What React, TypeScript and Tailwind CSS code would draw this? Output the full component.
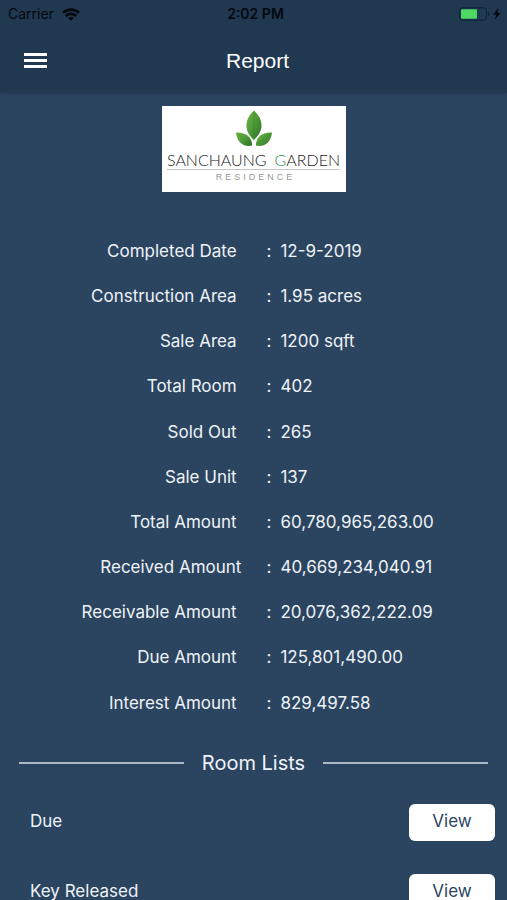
const details = [
  { label: "Completed Date ", value: "12-9-2019" },
  { label: "Construction Area ", value: "1.95 acres" },
  { label: "Sale Area ", value: "1200 sqft" },
  { label: "Total Room ", value: "402" },
  { label: "Sold Out ", value: "265" },
  { label: "Sale Unit ", value: "137" },
  { label: "Total Amount ", value: "60,780,965,263.00" },
  { label: "Received Amount", value: "40,669,234,040.91" },
  { label: "Receivable Amount ", value: "20,076,362,222.09" },
  { label: "Due Amount ", value: "125,801,490.00" },
  { label: "Interest Amount ", value: "829,497.58" },
];

const rooms = ["Due", "Key Released"];

function WifiIcon() {
  return (
    <svg width="18" height="13" viewBox="0 0 18 13" fill="none" stroke="currentColor" strokeWidth="2.6" aria-hidden="true">
      <path d="M1 4.800C5.500 0.500 12.500 0.500 17 4.800" />
      <path d="M3.900 8C6.800 5.200 11.200 5.200 14.100 8" />
      <path d="M9 12.800L6.200 10.200C7.800 8.700 10.200 8.700 11.800 10.200Z" fill="currentColor" stroke="none" />
    </svg>
  );
}

function BatteryIcon() {
  return (
    <svg width="44" height="14" viewBox="0 0 44 14" aria-hidden="true">
      <rect x="0.500" y="0.800" width="27" height="12.400" rx="3" fill="none" stroke="#0d2238" strokeWidth="1" />
      <rect x="2" y="2.300" width="16" height="9.400" rx="1" fill="#4cd964" />
      <path d="M29 5v4c1.600-0.600 1.600-3.400 0-4z" fill="#0d2238" />
      <path d="M39.500 1L34 7.800h3.400l-1.700 5L41.800 5.700h-3.500z" fill="#03080e" />
    </svg>
  );
}

function LeafMark() {
  return (
    <svg width="38" height="37" viewBox="0 0 38 37" aria-hidden="true">
      <defs>
        <linearGradient id="leaf" x1="0" y1="0" x2="1" y2="1">
          <stop offset="0" stopColor="#6fb543" />
          <stop offset="0.500" stopColor="#4d9a36" />
          <stop offset="1" stopColor="#2c7029" />
        </linearGradient>
      </defs>
      <path d="M19 0.500C9.500 9 8.500 21 18.800 30C29.500 21 28.500 9 19 0.500Z" fill="url(#leaf)" />
      <path d="M1 22.500C11 22 17 27 17.200 35.500C8 37.500 2 32 1 22.500Z" fill="url(#leaf)" />
      <path d="M37 22.500C27 22 21 27 20.800 35.500C30 37.500 36 32 37 22.500Z" fill="url(#leaf)" />
      <path d="M19 2V29M2 23.500L16.500 35M36 23.500L21.500 35" stroke="#2f7a2c" strokeWidth="0.600" fill="none" opacity="0.600" />
    </svg>
  );
}

export default function App() {
  return (
    <div className="flex h-screen flex-col overflow-hidden bg-[#2b445f] font-[Inter,sans-serif] text-[#eef3f8]">
      <header className="shrink-0 bg-[#203850] pb-3 shadow-sm">
        <div className="grid h-7 grid-cols-[1fr_auto_1fr] items-center pr-1 pl-2 text-sm text-[#03080e]">
          <div className="flex items-center gap-2">
            <span>Carrier</span>
            <WifiIcon />
          </div>
          <span className="font-semibold">2:02 PM</span>
          <div className="flex justify-end">
            <BatteryIcon />
          </div>
        </div>
        <div className="grid h-[53px] grid-cols-[1fr_auto_1fr] items-center pt-3 pr-4 pl-6">
          <button type="button" aria-label="Menu" className="flex w-[23px] flex-col gap-[3px]">
            <span className="h-[3px] bg-white" />
            <span className="h-[3px] bg-white" />
            <span className="h-[3px] bg-white" />
          </button>
          <h1 className="font-['Liberation_Sans',sans-serif] text-[21px] leading-6 text-white">Report</h1>
        </div>
      </header>

      <main className="min-h-0 flex-1 overflow-y-auto pt-[13px] [scrollbar-width:none]">
        <div className="mx-auto flex h-[86px] w-[184px] flex-col items-center bg-white pt-1 whitespace-nowrap">
          <LeafMark />
          <div className="flex gap-2 border-b border-[#c4c4c4] pt-1 font-[Lato,sans-serif] text-base leading-[18px] font-light text-[#222]">
            <span>SANCHAUNG</span>
            <span>
              <span className="text-[#2f8f4e]">G</span>ARDEN
            </span>
          </div>
          <div className="pl-1 font-['Liberation_Sans',sans-serif] text-[9px] leading-[14px] tracking-[3px] text-[#999]">
            RESIDENCE
          </div>
        </div>

        <dl className="mt-[37px] grid h-[497px] auto-rows-fr text-[17px]">
          {details.map((item) => (
            <div key={item.label} className="grid grid-cols-[10fr_11fr] items-center">
              <dt className="text-right whitespace-pre">{item.label}</dt>
              <dd className="flex pl-[25px]">
                <span className="w-[14px]">:</span>
                {item.value}
              </dd>
            </div>
          ))}
        </dl>

        <div className="mt-5 flex items-center gap-[18px] px-[19px]">
          <span className="h-[2px] flex-1 bg-[#a9b9c9]" />
          <h2 className="text-xl leading-[34px]">Room Lists</h2>
          <span className="h-[2px] flex-1 bg-[#a9b9c9]" />
        </div>

        <ul className="mt-[7px] pr-3 pl-[30px]">
          {rooms.map((room) => (
            <li key={room} className="flex h-[70px] items-center justify-between text-[17px]">
              <span>{room}</span>
              <button type="button" className="h-[37px] w-[86px] rounded-md bg-white text-[#2b445f]">
                View
              </button>
            </li>
          ))}
        </ul>
      </main>
    </div>
  );
}
